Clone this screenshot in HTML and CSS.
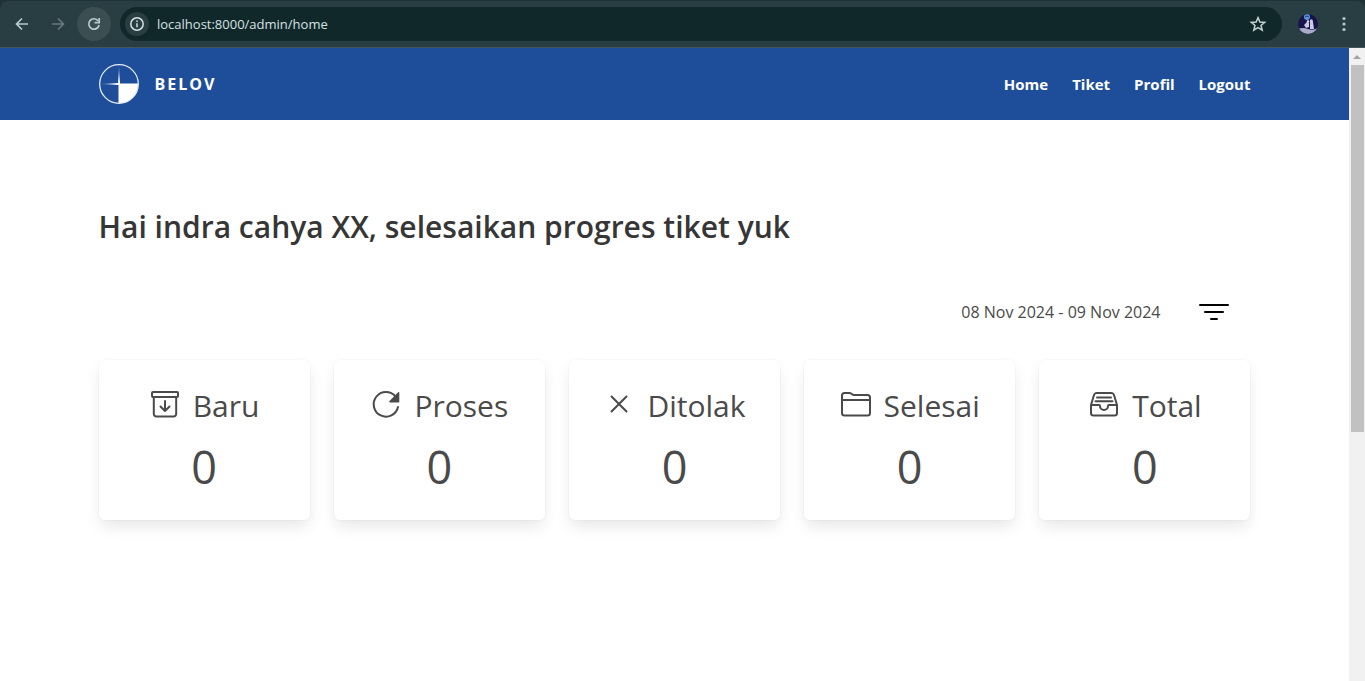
FILE: index.html
```html
<!DOCTYPE html>
<html lang="id">
<head>
<meta charset="utf-8">
<title>Belov</title>
<link rel="stylesheet" href="styles.css">
</head>
<body>
<div class="browser">
  <div class="toolbar">
    <button class="tool" aria-label="Back"><svg width="16" height="16" viewBox="0 0 16 16" fill="none" stroke="#b5cccd" stroke-width="1.7"><path d="M14 8H3M8 2.5 2.5 8 8 13.5"/></svg></button>
    <button class="tool" aria-label="Forward"><svg width="16" height="16" viewBox="0 0 16 16" fill="none" stroke="#66797c" stroke-width="1.7"><path d="M2 8h11M8 2.5 13.5 8 8 13.5"/></svg></button>
    <button class="tool tool-active" aria-label="Reload"><svg width="16" height="16" viewBox="0 0 16 16" fill="none" stroke="#b5cccd" stroke-width="1.7"><path d="M12.2 4.9A5.2 5.2 0 1 0 13.1 9"/><path d="M13.2 2v4.700H8.500" /></svg></button>
    <div class="address">
      <button class="site-info" aria-label="Site information"><svg width="16" height="16" viewBox="0 0 16 16" fill="none" stroke="#d5e1e1" stroke-width="1.5"><circle cx="8" cy="8" r="6.200"/><path d="M8 7.200v4M8 4.500v1.500"/></svg></button>
      <input class="url" aria-label="Address" value="localhost:8000/admin/home">
      <button class="star" aria-label="Bookmark"><svg width="18" height="18" viewBox="0 0 18 18" fill="none" stroke="#c2d2d2" stroke-width="1.500"><path d="M9 2.600 10.900 7l4.800.4-3.700 3.100 1.200 4.700L9 12.700l-4.200 2.500L6 10.500 2.300 7.400 7.100 7z"/></svg></button>
    </div>
    <button class="profile" aria-label="Profile"><svg width="20" height="20" viewBox="0 0 20 20"><defs><clipPath id="avatar"><circle cx="10" cy="10" r="10"/></clipPath></defs><g clip-path="url(#avatar)"><path fill="#17134d" d="M0 0h20v20H0z"/><path fill="#a9abc8" d="M0 15q5-2 10 0t10-1v6H0z"/><circle cx="9" cy="3" r="3" fill="#5d98d2"/><path d="M7 3q2-2 4 0" stroke="#223b77" fill="none"/><path fill="#c9cbe3" d="M12 6q3-2 3 2l1 7h-4zM6 11l3-3 2 1v4l-3 1z"/><circle cx="10" cy="7.500" r="1.300" fill="#dfdef0"/></g></svg></button>
    <button class="more" aria-label="Menu"><svg width="16" height="16" viewBox="0 0 16 16" fill="#b5cccd"><circle cx="8" cy="2.500" r="1.600"/><circle cx="8" cy="8" r="1.600"/><circle cx="8" cy="13.500" r="1.600"/></svg></button>
  </div>
  <div class="viewport">
    <div class="page">
      <header class="navbar">
        <div class="container navbar-inner">
          <a class="brand" href="#"><svg width="40" height="40" viewBox="0 0 40 40"><defs><linearGradient id="fadeY" x1="0" y1="0" x2="0" y2="1"><stop stop-color="#fff" stop-opacity=".1"/><stop offset="1" stop-color="#fff"/></linearGradient><linearGradient id="fadeX"><stop stop-color="#fff" stop-opacity=".1"/><stop offset="1" stop-color="#fff"/></linearGradient></defs><circle cx="20" cy="20" r="19.300" fill="none" stroke="#e4ebf6" stroke-width="1.300"/><path d="M19.500 19.500H39A19 19 0 0 1 19.500 39z" fill="#fff"/><path d="M20 1 21 17.500V20h-2v-2.500z" fill="url(#fadeY)"/><path d="M1 20 17 19h3v2h-3z" fill="url(#fadeX)"/></svg><span>BELOV</span></a>
          <nav class="menu"><a href="#">Home</a><a href="#">Tiket</a><a href="#">Profil</a><a href="#">Logout</a></nav>
        </div>
      </header>
      <main class="container">
        <h1 class="title">Hai indra cahya XX, selesaikan progres tiket yuk</h1>
        <div class="filter">
          <span>08 Nov 2024 - 09 Nov 2024</span>
          <button class="filter-button" aria-label="Filter"><svg width="32" height="20" viewBox="0 0 32 20" fill="none" stroke="#000" stroke-width="2" stroke-linecap="round"><path d="M2 3h28M7 10h18M13 17h6"/></svg></button>
        </div>
        <section class="cards">
          <article class="card">
            <h2 class="card-title"><svg class="icon" viewBox="0 0 32 32"><rect x="3" y="4" width="26" height="5" rx="1"/><path d="M4.800 9v17a2.500 2.500 0 0 0 2.500 2.500h17.400a2.500 2.500 0 0 0 2.500-2.500V9M16 13v10M11.500 18.500 16 23l4.500-4.500"/></svg>Baru</h2>
            <p class="count">0</p>
          </article>
          <article class="card">
            <h2 class="card-title"><svg class="icon" viewBox="0 0 32 32"><path d="M28 19A12.300 12.300 0 1 1 25.500 8.500"/><path fill="#4a4a4a" stroke="none" d="M29.300 4.800v9a.7.7 0 0 1-.7.7h-8.400c-1 0-1.300-.8-.7-1.400l8.600-8.800c.6-.6 1.200-.3 1.200.5z"/></svg>Proses</h2>
            <p class="count">0</p>
          </article>
          <article class="card">
            <h2 class="card-title"><svg class="icon" viewBox="0 0 32 32"><path d="m8.500 8.500 15 15m0-15-15 15"/></svg>Ditolak</h2>
            <p class="count">0</p>
          </article>
          <article class="card">
            <h2 class="card-title"><svg class="icon" viewBox="0 0 32 32"><path d="M2 12V7.500Q2 5 4.500 5h5c2 0 2.500 2 4.500 2h13.500Q30 7 30 9.500V25q0 2.500-2.500 2.500h-23Q2 27.500 2 25V12h28"/></svg>Selesai</h2>
            <p class="count">0</p>
          </article>
          <article class="card">
            <h2 class="card-title"><svg class="icon" viewBox="0 0 32 32"><path d="M3 17 6 7q.6-2 2.500-2h15Q25.400 5 26 7l3 10v8q0 2.500-2.500 2.500h-21Q3 27.500 3 25V17h8q1 0 1 1a4 4 0 0 0 8 0q0-1 1-1h8M9 9.500h14M7.500 13.300h17"/></svg>Total</h2>
            <p class="count">0</p>
          </article>
        </section>
      </main>
    </div>
    <div class="scrollbar"><svg width="16" height="17" viewBox="0 0 16 17"><path d="m4 11 4-4 4 4z" fill="#a3a3a3"/></svg><div class="thumb"></div></div>
  </div>
</div>
</body>
</html>
```
FILE: styles.css
```css
* { box-sizing: border-box; }
body {
  margin: 0;
  font-family: "Open Sans", "Noto Sans", sans-serif;
  font-size: 16px;
  color: #4a4a4a;
  background: #fff;
}
h1, h2, p { margin: 0; }
button { padding: 0; border: 0; background: none; display: grid; place-items: center; flex: none; }
a { color: inherit; text-decoration: none; }
.browser { height: 100vh; display: flex; flex-direction: column; overflow: hidden; background: #1f3236; }
.toolbar {
  display: flex;
  align-items: center;
  height: 47px;
  margin-top: 1px;
  padding: 0 13px 0 5px;
  background: #283e42;
  border-bottom: 1px solid #45565a;
  border-radius: 8px 8px 0 0;
  flex: none;
}
.tool { width: 34px; height: 34px; border-radius: 50%; margin-right: 2px; }
.tool-active { background: #3b4f53; }
.address {
  flex: 1;
  display: flex;
  align-items: center;
  height: 34px;
  margin: 0 16px 0 7px;
  padding: 0 15px 0 5px;
  border-radius: 17px;
  background: #11282b;
}
.site-info { width: 24px; height: 24px; border-radius: 50%; background: #283e42; }
.url {
  flex: 1;
  min-width: 0;
  margin-left: 8px;
  padding: 0;
  border: 0;
  background: none;
  color: #d7e0e0;
  font: 13px "Open Sans", sans-serif;
}
.profile { margin-right: 18px; }
.viewport { flex: 1; display: flex; min-height: 0; background: #fff; }
.page { flex: 1; min-width: 0; overflow: hidden; }
.container { max-width: 1200px; margin: 0 auto; padding: 0 24px; }
.navbar { background: #1e4e9a; color: #fff; }
.navbar-inner { display: flex; align-items: center; justify-content: space-between; height: 72px; }
.brand { display: flex; align-items: center; gap: 16px; font-weight: 700; letter-spacing: 2px; }
.menu { display: flex; gap: 24px; font-size: 15px; font-weight: 700; }
.title { padding-top: 83px; font-size: 30px; line-height: 48px; font-weight: 600; color: #363636; }
.filter { display: flex; align-items: center; justify-content: flex-end; gap: 37px; margin-top: 45px; padding-right: 21px; height: 32px; }
.cards { display: grid; grid-template-columns: repeat(5, 1fr); gap: 24px; margin-top: 32px; }
.card {
  padding: 22px 12px 20px;
  border-radius: 6px;
  background: #fff;
  text-align: center;
  box-shadow: 0 8px 16px -2px rgba(10, 10, 10, .1), 0 0 0 1px rgba(10, 10, 10, .02);
}
.card-title { display: flex; justify-content: center; align-items: center; gap: 12px; font-size: 30px; line-height: 48px; font-weight: 400; }
.icon { width: 32px; height: 32px; margin-bottom: 4px; fill: none; stroke: #4a4a4a; stroke-width: 2; stroke-linecap: round; stroke-linejoin: round; flex: none; }
.count { padding-top: 4px; font-size: 45px; line-height: 66px; }
.scrollbar { width: 16px; background: #f1f1f1; display: flex; flex-direction: column; flex: none; }
.scrollbar svg { flex: none; }
.thumb { height: 58%; margin: 0 1px 0 2px; background: #c1c1c1; }
```
